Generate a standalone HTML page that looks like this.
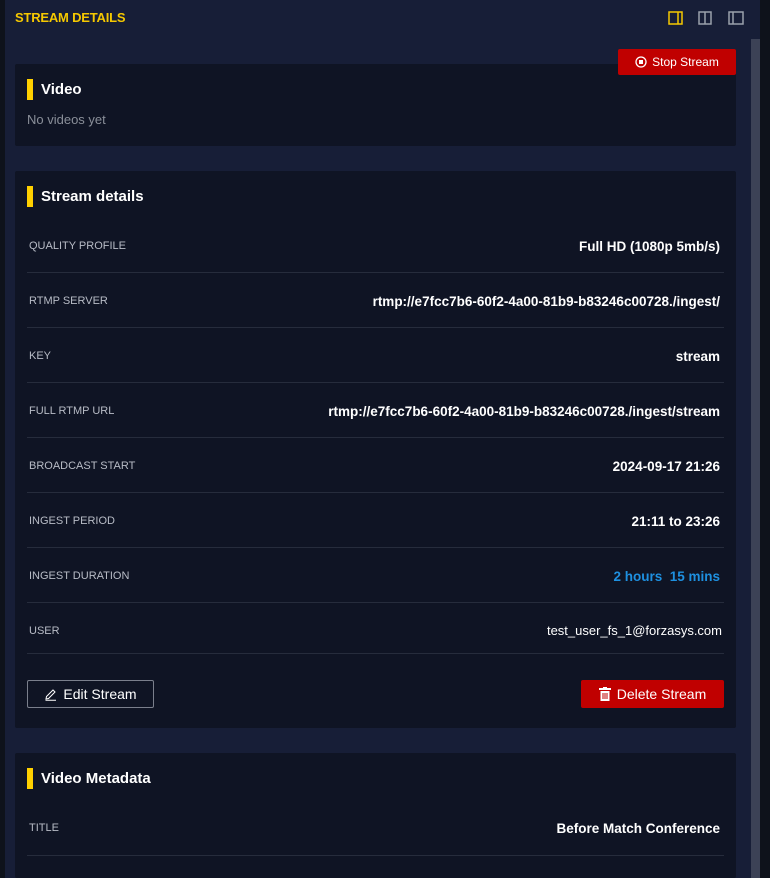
<!DOCTYPE html>
<html style="width:770px;height:878px;overflow:hidden"><head><style>
*{margin:0;padding:0;box-sizing:border-box}
body{width:770px;height:878px;overflow:hidden;background:#0e121b;font-family:"Liberation Sans",sans-serif;position:relative}
.panel{position:absolute;left:5px;top:0;width:755px;height:878px;background:#171e37}
.title{position:absolute;left:15px;top:10px;color:#f5c800;font-weight:bold;font-size:13px;letter-spacing:-0.2px}
.scroll{position:absolute;left:751px;top:39px;width:9px;height:839px;background:#3c4256}
.card{position:absolute;left:15px;width:721px;background:#0f1424;border-radius:2px;overflow:hidden}
.h{position:absolute;left:12px;height:21px;border-left:6px solid #ffd000;padding-left:8px;color:#fff;font-weight:bold;font-size:15px;line-height:21px}
.row{position:absolute;left:12px;width:697px;height:55px;border-bottom:1px solid #262c3c}
.lab{position:absolute;left:2px;top:0;font-size:11px;color:#b8bcc6}
.val{position:absolute;right:4px;top:0;font-size:13.5px;font-weight:bold;color:#fff;white-space:nowrap}
.btn{position:absolute;font-size:14px;color:#fff;display:flex;align-items:center;justify-content:center;gap:6px;border-radius:2px}
</style></head><body>
<div class="panel"></div>
<div class="title">STREAM DETAILS</div>
<svg style="position:absolute;left:668px;top:11px" width="16" height="15"><rect x="1" y="1" width="13" height="12" fill="none" stroke="#f5c800" stroke-width="1.5"/><line x1="10" y1="1" x2="10" y2="13" stroke="#f5c800" stroke-width="1.5"/></svg>
<svg style="position:absolute;left:698px;top:11px" width="16" height="15"><rect x="1" y="1" width="12" height="12" fill="none" stroke="#9aa0ab" stroke-width="1.5"/><line x1="7" y1="1" x2="7" y2="13" stroke="#9aa0ab" stroke-width="1.5"/></svg>
<svg style="position:absolute;left:728px;top:11px" width="16" height="15"><rect x="1" y="1" width="14" height="12" fill="none" stroke="#9aa0ab" stroke-width="1.5"/><line x1="5" y1="1" x2="5" y2="13" stroke="#9aa0ab" stroke-width="1.5"/></svg>
<div class="scroll"></div>

<div class="card" style="top:64px;height:82px">
 <div class="h" style="top:15px">Video</div>
 <div style="position:absolute;left:12px;top:48px;font-size:13px;color:#8a8f99">No videos yet</div>
</div>
<div class="btn" style="left:618px;top:49px;width:118px;height:26px;background:#c00000;font-size:12px;gap:5px"><svg width="12" height="12"><circle cx="6" cy="6" r="5" fill="none" stroke="#fff" stroke-width="1.3"/><rect x="4" y="4" width="4" height="4" fill="#fff"/></svg>Stop Stream</div>

<div class="card" style="top:171px;height:557px">
 <div class="h" style="top:15px">Stream details</div>
 <div class="row" style="top:47px"><span class="lab" style="top:22px">QUALITY PROFILE</span><span class="val" style="top:21px">Full HD (1080p 5mb/s)</span></div>
 <div class="row" style="top:102px"><span class="lab" style="top:22px">RTMP SERVER</span><span class="val" style="top:21px">rtmp://e7fcc7b6-60f2-4a00-81b9-b83246c00728./ingest/</span></div>
 <div class="row" style="top:157px"><span class="lab" style="top:22px">KEY</span><span class="val" style="top:21px">stream</span></div>
 <div class="row" style="top:212px"><span class="lab" style="top:22px">FULL RTMP URL</span><span class="val" style="top:21px">rtmp://e7fcc7b6-60f2-4a00-81b9-b83246c00728./ingest/stream</span></div>
 <div class="row" style="top:267px"><span class="lab" style="top:22px">BROADCAST START</span><span class="val" style="top:21px">2024-09-17 21:26</span></div>
 <div class="row" style="top:322px"><span class="lab" style="top:22px">INGEST PERIOD</span><span class="val" style="top:21px">21:11 to 23:26</span></div>
 <div class="row" style="top:377px"><span class="lab" style="top:22px">INGEST DURATION</span><span class="val" style="top:21px;color:#1e90e0">2 hours &nbsp;15 mins</span></div>
 <div class="row" style="top:432px;height:51px"><span class="lab" style="top:22px">USER</span><span class="val" style="top:20px;font-weight:normal;right:2px;font-size:13px">test_user_fs_1@forzasys.com</span></div>
 <div class="btn" style="left:12px;top:509px;width:127px;height:28px;border:1px solid #7a7f8c"><svg width="13" height="13"><path d="M2 11 L2.5 8.5 L9 2 L11 4 L4.5 10.5 Z M1.5 12.3 H12" fill="none" stroke="#fff" stroke-width="1"/></svg>Edit Stream</div>
 <div class="btn" style="left:566px;top:509px;width:143px;height:28px;background:#c00000"><svg width="12" height="14"><rect x="0" y="1" width="12" height="2" fill="#fff"/><rect x="4" y="0" width="4" height="2" fill="#fff"/><path d="M1.5 4 H10.5 V14 H1.5 Z" fill="#fff"/><path d="M4 6 V12 M6 6 V12 M8 6 V12" stroke="#c00000" stroke-width="1"/></svg>Delete Stream</div>
</div>

<div class="card" style="top:753px;height:125px">
 <div class="h" style="top:15px">Video Metadata</div>
 <div class="row" style="top:47px;height:56px"><span class="lab" style="top:22px">TITLE</span><span class="val" style="top:21px">Before Match Conference</span></div>
</div>
</body></html>
